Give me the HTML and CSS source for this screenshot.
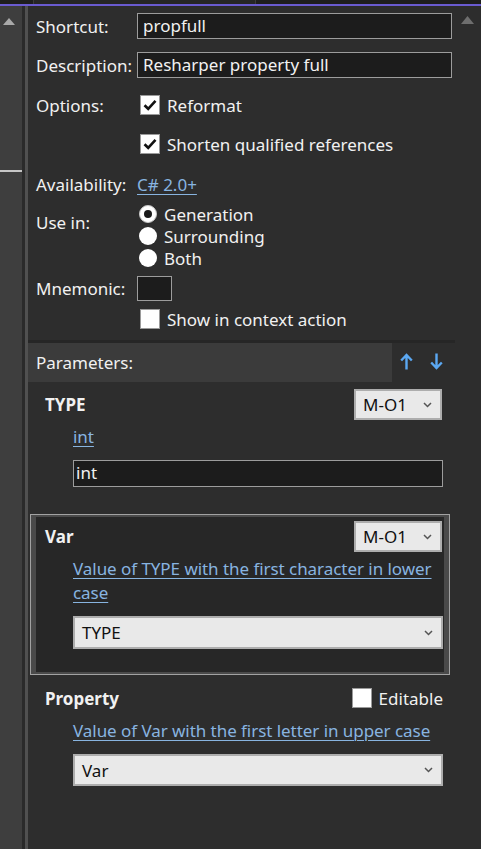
FILE: index.html
```html
<!DOCTYPE html>
<html>
<head>
<meta charset="utf-8">
<link rel="stylesheet" href="styles.css">
</head>
<body>
<div class="top"><div class="tab"></div></div>
<div class="accent"></div>
<div class="main">
  <div class="lscroll">
    <svg class="larrow" width="12" height="7" viewBox="0 0 12 7"><polygon points="0,7 6,0 12,7" fill="#a9a9a9"/></svg>
    <div class="thumbline"></div>
  </div>
  <div class="lgap"></div>
  <div class="lsep"></div>
  <div class="panel">
    <div class="form">
      <div class="row r-short">
        <div class="lbl">Shortcut:</div>
        <div class="tb">propfull</div>
      </div>
      <div class="row r-desc">
        <div class="lbl">Description:</div>
        <div class="tb">Resharper property full</div>
      </div>
      <div class="row r-opt">
        <div class="lbl">Options:</div>
        <div class="cb"><svg width="14" height="12" viewBox="0 0 14 12"><path d="M1.5 6.2 L5.2 9.8 L12.5 1.8" fill="none" stroke="#111" stroke-width="2.6"/></svg></div>
        <div class="cbt">Reformat</div>
      </div>
      <div class="row r-opt2">
        <div class="lbl"></div>
        <div class="cb"><svg width="14" height="12" viewBox="0 0 14 12"><path d="M1.5 6.2 L5.2 9.8 L12.5 1.8" fill="none" stroke="#111" stroke-width="2.6"/></svg></div>
        <div class="cbt">Shorten qualified references</div>
      </div>
      <div class="row r-avail">
        <div class="lbl">Availability:</div>
        <a class="lnk">C# 2.0+</a>
      </div>
      <div class="row r-use">
        <div class="lbl lbl-use">Use in:</div>
        <div class="radios">
          <div class="ropt"><div class="radio on"></div><div class="rt">Generation</div></div>
          <div class="ropt"><div class="radio"></div><div class="rt">Surrounding</div></div>
          <div class="ropt"><div class="radio"></div><div class="rt">Both</div></div>
        </div>
      </div>
      <div class="row r-mn">
        <div class="lbl">Mnemonic:</div>
        <div class="mnbox"></div>
      </div>
      <div class="row r-ctx">
        <div class="lbl"></div>
        <div class="cb"></div>
        <div class="cbt">Show in context action</div>
      </div>

      <div class="phead">
        <div class="ph-title">Parameters:</div>
        <div class="ph-tools">
          <svg width="13" height="17" viewBox="0 0 13 17"><path d="M6.5 16.5 V2.5 M1.2 7.5 L6.5 2 L11.8 7.5" fill="none" stroke="#5ba8f2" stroke-width="2.4"/></svg>
          <svg width="13" height="17" viewBox="0 0 13 17"><path d="M6.5 0.5 V14.5 M1.2 9.5 L6.5 15 L11.8 9.5" fill="none" stroke="#5ba8f2" stroke-width="2.4"/></svg>
        </div>
      </div>

      <div class="param p-type">
        <div class="pin">
          <div class="prow">
            <div class="pname">TYPE</div>
            <div class="dd dd-sm"><span>M-O1</span><svg class="chev" width="9" height="6" viewBox="0 0 9 6"><path d="M1 1 L4.5 4.5 L8 1" fill="none" stroke="#555" stroke-width="1.5"/></svg></div>
          </div>
          <a class="plink">int</a>
          <div class="ptb">int</div>
        </div>
      </div>

      <div class="param sel">
        <div class="pin">
          <div class="prow">
            <div class="pname">Var</div>
            <div class="dd dd-sm"><span>M-O1</span><svg class="chev" width="9" height="6" viewBox="0 0 9 6"><path d="M1 1 L4.5 4.5 L8 1" fill="none" stroke="#555" stroke-width="1.5"/></svg></div>
          </div>
          <a class="plink">Value of TYPE with the first character in lower case</a>
          <div class="dd dd-wide"><span>TYPE</span><svg class="chev" width="9" height="6" viewBox="0 0 9 6"><path d="M1 1 L4.5 4.5 L8 1" fill="none" stroke="#555" stroke-width="1.5"/></svg></div>
        </div>
      </div>

      <div class="param">
        <div class="pin">
          <div class="prow">
            <div class="pname">Property</div>
            <div class="edit">
              <div class="cb cb-e"></div>
              <div class="cbt">Editable</div>
            </div>
          </div>
          <a class="plink">Value of Var with the first letter in upper case</a>
          <div class="dd dd-wide"><span>Var</span><svg class="chev" width="9" height="6" viewBox="0 0 9 6"><path d="M1 1 L4.5 4.5 L8 1" fill="none" stroke="#555" stroke-width="1.5"/></svg></div>
        </div>
      </div>
    </div>
    <div class="rscroll">
      <svg width="13" height="8" viewBox="0 0 13 8"><polygon points="0,8 6.5,0 13,8" fill="#6e6e6e"/></svg>
    </div>
  </div>
</div>
</body>
</html>
```
FILE: styles.css
```css
html, body {
  margin: 0;
  padding: 0;
}
body {
  width: 481px;
  height: 849px;
  overflow: hidden;
  background: #2d2d2d;
  font-family: "Noto Sans", "Open Sans", sans-serif;
  font-size: 17px;
  color: #f1f1f1;
}
.top {
  height: 4px;
  background: #1e1e1e;
  display: flex;
}
.tab {
  margin-left: 33px;
  width: 221px;
  background: #262626;
  border-left: 1px solid #3c3c3c;
  border-right: 1px solid #3c3c3c;
}
.accent {
  height: 2px;
  background: #6a5bd0;
}
.main {
  display: flex;
  height: 843px;
}
.lscroll {
  width: 22px;
  background: #3e3e3e;
  display: flex;
  flex-direction: column;
  align-items: center;
}
.larrow {
  margin-top: 12px;
  margin-left: -4px;
}
.thumbline {
  margin-top: 145px;
  height: 2px;
  width: 22px;
  background: #c6c6c6;
}
.lgap {
  width: 3px;
  background: #2a2a2a;
}
.lsep {
  width: 3px;
  background: #505050;
}
.panel {
  flex: 1;
  display: flex;
  background: #2d2d2d;
}
.form {
  flex: 1;
  display: flex;
  flex-direction: column;
}
.rscroll {
  width: 26px;
  display: flex;
  justify-content: center;
}
.rscroll svg {
  margin-top: 10px;
  margin-left: -2px;
}
.row {
  display: flex;
  align-items: center;
  padding-left: 8px;
  padding-right: 3px;
}
.lbl {
  width: 101px;
  flex: none;
  white-space: nowrap;
}
.tb {
  flex: 1;
  height: 26px;
  box-sizing: border-box;
  background: #1c1c1c;
  border: 1px solid #9c9c9c;
  padding-left: 5px;
  line-height: 23px;
  white-space: nowrap;
}
.r-short { margin-top: 7px; height: 26px; }
.r-desc { margin-top: 13px; height: 26px; }
.r-opt { margin-top: 16px; height: 22px; }
.r-opt2 { margin-top: 17px; height: 22px; }
.r-avail { margin-top: 19px; height: 20px; }
.r-use { margin-top: 9px; align-items: flex-start; }
.r-mn { margin-top: 7px; height: 25px; }
.r-ctx { margin-top: 7px; height: 22px; }
.cb {
  width: 20px;
  height: 20px;
  margin-left: 3px;
  box-sizing: border-box;
  background: #ffffff;
  border: 1px solid #9a9a9a;
  display: flex;
  align-items: center;
  justify-content: center;
  flex: none;
}
.cbt {
  margin-left: 7px;
  white-space: nowrap;
}
.lnk, .plink {
  color: #88b4e0;
  text-decoration: underline;
  text-underline-offset: 3px;
  text-decoration-thickness: 1px;
}
.lbl-use {
  line-height: 22px;
  padding-top: 9px;
}
.radios {
  display: flex;
  flex-direction: column;
}
.ropt {
  display: flex;
  align-items: center;
  height: 22px;
}
.radio {
  width: 18px;
  height: 18px;
  margin-left: 2px;
  border-radius: 50%;
  background: #ffffff;
  display: flex;
  align-items: center;
  justify-content: center;
}
.radio.on {
  box-sizing: border-box;
  border: 1px solid #c8c8c8;
}
.radio.on::after {
  content: "";
  width: 8px;
  height: 8px;
  border-radius: 50%;
  background: #1a1a1a;
}
.rt {
  margin-left: 7px;
}
.mnbox {
  width: 35px;
  height: 25px;
  box-sizing: border-box;
  background: #1c1c1c;
  border: 1px solid #9c9c9c;
}
.phead {
  margin-top: 10px;
  border-top: 3px solid #262626;
  height: 39px;
  display: flex;
}
.ph-title {
  width: 356px;
  padding-left: 8px;
  background: #3b3b3b;
  display: flex;
  align-items: center;
}
.ph-tools {
  flex: 1;
  display: flex;
  align-items: center;
  gap: 17px;
  padding-left: 8px;
  padding-bottom: 2px;
}
.param {
  margin: 1px 5px 0 2px;
  border: 1px solid transparent;
  padding: 2px 5px;
}
.param.sel {
  margin-top: 0;
  border-color: #a2a2a2;
  background: #4a4a4a;
}
.param.sel .pin {
  background: #272727;
}
.p-type {
  margin-top: 0;
}
.pin {
  padding: 4px 1px 23px 9px;
}
.p-type .pin {
  padding-bottom: 24px;
}
.prow {
  display: flex;
  align-items: center;
  height: 31px;
}
.pname {
  font-weight: bold;
  flex: 1;
}
.dd {
  box-sizing: border-box;
  background: #e9e9e9;
  border: 2px solid #adadad;
  color: #111;
  display: flex;
  align-items: center;
  padding-left: 7px;
  padding-right: 8px;
}
.dd span {
  flex: 1;
}
.dd-sm {
  width: 88px;
  height: 31px;
  margin-right: 1px;
}
.dd-wide {
  margin-left: 28px;
  height: 33px;
  margin-top: 11px;
}
.p-type .dd-wide, .param:last-child .dd-wide {
  height: 32px;
}
.plink {
  display: block;
  margin-left: 28px;
  margin-top: 5px;
  line-height: 24px;
  letter-spacing: -0.05px;
}
.ptb {
  margin-left: 28px;
  margin-top: 11px;
  height: 27px;
  box-sizing: border-box;
  background: #1c1c1c;
  border: 1px solid #9c9c9c;
  padding-left: 2px;
  line-height: 24px;
}
.edit {
  display: flex;
  align-items: center;
  margin-right: 0px;
}
.cb-e {
  margin-left: 0;
  margin-top: -2px;
}
```
